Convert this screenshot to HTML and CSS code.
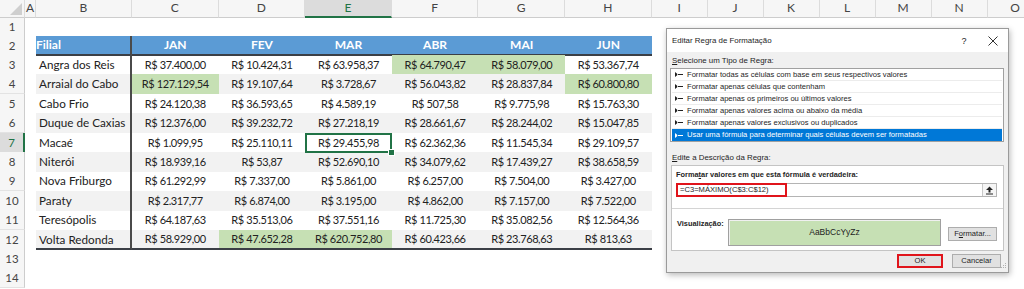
FILE: index.html
```html
<!DOCTYPE html>
<html lang="pt-BR">
<head>
<meta charset="utf-8">
<title>Editar Regra de Formatação</title>
<link rel="stylesheet" href="styles.css">
</head>
<body>
<div class="sheet">
  <div class="row colhdr">
    <div class="ch corner"><svg class="tri" width="12" height="12" viewBox="0 0 12 12"><polygon points="12,0 12,12 0,12" fill="#cfcfcf"/></svg></div>
    <div class="ch">A</div><div class="ch">B</div><div class="ch">C</div><div class="ch">D</div>
    <div class="ch sel">E</div><div class="ch">F</div><div class="ch">G</div><div class="ch">H</div>
    <div class="ch">I</div><div class="ch">J</div><div class="ch">K</div><div class="ch">L</div>
    <div class="ch">M</div><div class="ch">N</div><div class="ch">O</div>
  </div>
  <div class="row r1"><div class="rh">1</div></div>
  <div class="row r2">
    <div class="rh">2</div><div></div>
    <div class="th nm sep">Filial</div>
    <div class="th">JAN</div><div class="th">FEV</div><div class="th">MAR</div>
    <div class="th">ABR</div><div class="th">MAI</div><div class="th">JUN</div>
  </div>
  <div class="row">
    <div class="rh">3</div><div></div>
    <div class="td nm sep">Angra dos Reis</div>
    <div class="td">R$ 37.400,00</div><div class="td">R$ 10.424,31</div><div class="td">R$ 63.958,37</div>
    <div class="td hi">R$ 64.790,47</div><div class="td hi">R$ 58.079,00</div><div class="td">R$ 53.367,74</div>
  </div>
  <div class="row alt">
    <div class="rh">4</div><div></div>
    <div class="td nm sep">Arraial do Cabo</div>
    <div class="td hi">R$ 127.129,54</div><div class="td">R$ 19.107,64</div><div class="td">R$ 3.728,67</div>
    <div class="td">R$ 56.043,82</div><div class="td">R$ 28.837,84</div><div class="td hi">R$ 60.800,80</div>
  </div>
  <div class="row">
    <div class="rh">5</div><div></div>
    <div class="td nm sep">Cabo Frio</div>
    <div class="td">R$ 24.120,38</div><div class="td">R$ 36.593,65</div><div class="td">R$ 4.589,19</div>
    <div class="td">R$ 507,58</div><div class="td">R$ 9.775,98</div><div class="td">R$ 15.763,30</div>
  </div>
  <div class="row alt">
    <div class="rh">6</div><div></div>
    <div class="td nm sep">Duque de Caxias</div>
    <div class="td">R$ 12.376,00</div><div class="td">R$ 39.232,72</div><div class="td">R$ 27.218,19</div>
    <div class="td">R$ 28.661,67</div><div class="td">R$ 28.244,02</div><div class="td">R$ 15.047,85</div>
  </div>
  <div class="row">
    <div class="rh rsel">7</div><div></div>
    <div class="td nm sep">Macaé</div>
    <div class="td">R$ 1.099,95</div><div class="td">R$ 25.110,11</div><div class="td active">R$ 29.455,98</div>
    <div class="td">R$ 62.362,36</div><div class="td">R$ 11.545,34</div><div class="td">R$ 29.109,57</div>
  </div>
  <div class="row alt">
    <div class="rh">8</div><div></div>
    <div class="td nm sep">Niterói</div>
    <div class="td">R$ 18.939,16</div><div class="td">R$ 53,87</div><div class="td">R$ 52.690,10</div>
    <div class="td">R$ 34.079,62</div><div class="td">R$ 17.439,27</div><div class="td">R$ 38.658,59</div>
  </div>
  <div class="row">
    <div class="rh">9</div><div></div>
    <div class="td nm sep">Nova Friburgo</div>
    <div class="td">R$ 61.292,99</div><div class="td">R$ 7.337,00</div><div class="td">R$ 5.861,00</div>
    <div class="td">R$ 6.257,00</div><div class="td">R$ 7.504,00</div><div class="td">R$ 3.427,00</div>
  </div>
  <div class="row alt">
    <div class="rh">10</div><div></div>
    <div class="td nm sep">Paraty</div>
    <div class="td">R$ 2.317,77</div><div class="td">R$ 6.874,00</div><div class="td">R$ 3.195,00</div>
    <div class="td">R$ 4.862,00</div><div class="td">R$ 7.157,00</div><div class="td">R$ 7.522,00</div>
  </div>
  <div class="row">
    <div class="rh">11</div><div></div>
    <div class="td nm sep">Teresópolis</div>
    <div class="td">R$ 64.187,63</div><div class="td">R$ 35.513,06</div><div class="td">R$ 37.551,16</div>
    <div class="td">R$ 11.725,30</div><div class="td">R$ 35.082,56</div><div class="td">R$ 12.564,36</div>
  </div>
  <div class="row alt last">
    <div class="rh">12</div><div></div>
    <div class="td nm sep">Volta Redonda</div>
    <div class="td">R$ 58.929,00</div><div class="td hi">R$ 47.652,28</div><div class="td hi">R$ 620.752,80</div>
    <div class="td">R$ 60.423,66</div><div class="td">R$ 23.768,63</div><div class="td">R$ 813,63</div>
  </div>
  <div class="row"><div class="rh">13</div></div>
  <div class="row"><div class="rh">14</div></div>
</div>

<div class="dlg">
  <div class="titlebar">
    <span class="ttl">Editar Regra de Formatação</span>
    <span class="q">?</span>
    <span class="x"><svg width="10" height="10" viewBox="0 0 10 10"><path d="M0.5 0.5 L9.5 9.5 M9.5 0.5 L0.5 9.5" stroke="#333" stroke-width="1" fill="none"/></svg></span>
  </div>
  <div class="dbody">
    <div class="lbl"><u>S</u>elecione um Tipo de Regra:</div>
    <div class="list">
      <div class="item"><svg class="ar" width="8" height="5" viewBox="0 0 8 5"><path d="M0 0 L0 5 L3 2.5 Z M2 2 H8 V3 H2 Z" fill="#222"/></svg>Formatar todas as células com base em seus respectivos valores</div>
      <div class="item"><svg class="ar" width="8" height="5" viewBox="0 0 8 5"><path d="M0 0 L0 5 L3 2.5 Z M2 2 H8 V3 H2 Z" fill="#222"/></svg>Formatar apenas células que contenham</div>
      <div class="item"><svg class="ar" width="8" height="5" viewBox="0 0 8 5"><path d="M0 0 L0 5 L3 2.5 Z M2 2 H8 V3 H2 Z" fill="#222"/></svg>Formatar apenas os primeiros ou últimos valores</div>
      <div class="item"><svg class="ar" width="8" height="5" viewBox="0 0 8 5"><path d="M0 0 L0 5 L3 2.5 Z M2 2 H8 V3 H2 Z" fill="#222"/></svg>Formatar apenas valores acima ou abaixo da média</div>
      <div class="item"><svg class="ar" width="8" height="5" viewBox="0 0 8 5"><path d="M0 0 L0 5 L3 2.5 Z M2 2 H8 V3 H2 Z" fill="#222"/></svg>Formatar apenas valores exclusivos ou duplicados</div>
      <div class="item on"><svg class="ar" width="8" height="5" viewBox="0 0 8 5"><path d="M0 0 L0 5 L3 2.5 Z M2 2 H8 V3 H2 Z" fill="#fff"/></svg>Usar uma fórmula para determinar quais células devem ser formatadas</div>
    </div>
    <div class="lbl lbl2"><u>E</u>dite a Descrição da Regra:</div>
    <div class="group">
      <div class="gtop">
        <div class="blbl">Forma<u>t</u>ar valores em que esta fórmula é verdadeira:</div>
        <div class="input">
          <span class="formula">=C3=MÁXIMO(C$3:C$12)</span>
          <span class="ibtn"><svg width="9" height="9" viewBox="0 0 9 9"><path d="M4.5 0.5 L8 4 H5.5 V6.5 H3.5 V4 H1 Z" fill="#222"/><rect x="1" y="7.5" width="7" height="1" fill="#222"/></svg></span>
        </div>
      </div>
      <div class="gbot">
        <div class="blbl vis">Visualização:</div>
        <div class="preview">AaBbCcYyZz</div>
        <div class="btn fmt">F<u>o</u>rmatar...</div>
      </div>
    </div>
    <div class="actions">
      <div class="btn ok">OK</div>
      <div class="btn cancel">Cancelar</div>
    </div>
  </div>
  <svg class="grip" width="8" height="8" viewBox="0 0 8 8"><g fill="#b0b0b0"><rect x="6" y="0" width="1" height="1"/><rect x="4" y="2" width="1" height="1"/><rect x="6" y="2" width="1" height="1"/><rect x="2" y="4" width="1" height="1"/><rect x="4" y="4" width="1" height="1"/><rect x="6" y="4" width="1" height="1"/></g></svg>
</div>
</body>
</html>
```
FILE: styles.css
```css
* { box-sizing: border-box; }
html, body { margin: 0; padding: 0; }
body {
  width: 1024px;
  height: 289px;
  overflow: hidden;
  position: relative;
  background: #fff;
  font-family: Lato, "Liberation Sans", sans-serif;
  color: #222;
}

.sheet { display: flex; flex-direction: column; }

.row {
  display: grid;
  grid-template-columns: 25px 11px 96px repeat(6, 86.6px) repeat(7, 56px);
  height: 19.4px;
  font-size: 12px;
  line-height: 19px;
  white-space: nowrap;
}
.colhdr { height: 17px; }
.r1 { height: 19px; }
.r2 { height: 19px; }

.ch {
  background: #f6f6f6;
  border-right: 1px solid #dcdcdc;
  border-bottom: 1px solid #cdcdcd;
  color: #444;
  text-align: center;
  line-height: 16px;
  font-size: 12px;
}
.ch.sel {
  background: #dcdcdc;
  border-bottom: 2px solid #217346;
  color: #217346;
}
.corner { position: relative; }
.corner .tri { position: absolute; right: 2px; bottom: 2px; }

.rh {
  background: #f6f6f6;
  border-right: 1px solid #cdcdcd;
  border-bottom: 1px solid #e3e3e3;
  color: #444;
  text-align: center;
  font-size: 11.5px;
}
.rh.rsel {
  background: #dcdcdc;
  border-right: 2px solid #217346;
  color: #217346;
}

.th {
  background: #5b9bd5;
  color: #fff;
  font-weight: bold;
  text-align: center;
  border-bottom: 2px solid #3b3f46;
  line-height: 17px;
  font-size: 12px;
}
.th.nm { text-align: left; }

.td {
  text-align: center;
  color: #222;
  font-size: 11px;
  letter-spacing: -0.4px;
}
.td.nm {
  padding-left: 3px;
  text-align: left;
  font-size: 11.7px;
  letter-spacing: 0;
}
.sep { border-right: 2px solid #4a4a4a; }
.alt .td { background: #f2f2f2; }
.td.hi, .alt .td.hi { background: #c6e0b4; }
.last .td { border-bottom: 2px solid #3b3f46; line-height: 18px; }

.td.active {
  position: relative;
  box-shadow: inset 0 0 0 2px #217346;
}
.td.active::after {
  content: "";
  position: absolute;
  right: -3px;
  bottom: -3px;
  width: 5px;
  height: 5px;
  background: #217346;
  border: 1px solid #fff;
}

/* ---------- dialog ---------- */
.dlg {
  position: absolute;
  left: 666px;
  top: 28px;
  width: 343px;
  height: 245px;
  background: #f0f0f0;
  border: 1px solid #9a9a9a;
  box-shadow: 1px 2px 6px rgba(0, 0, 0, 0.28);
  font-family: "Liberation Sans", Arial, sans-serif;
  font-size: 7.6px;
  color: #1e1e1e;
  white-space: nowrap;
}
.titlebar {
  height: 23px;
  background: #fff;
  display: flex;
  align-items: center;
  padding-left: 5px;
  font-size: 7.9px;
}
.ttl { flex: 1; }
.q { width: 12px; text-align: center; margin-right: 8px; font-size: 9px; }
.x { width: 30px; display: flex; justify-content: center; }

.dbody { padding: 3px 4px 0 3px; }
.lbl { height: 12px; line-height: 12px; padding-left: 2px; font-size: 7.9px; }
.lbl2 { margin-top: 10px; }
.list {
  margin-top: 1px;
  background: #fff;
  border: 1px solid #a0a0a0;
  padding: 0 1px;
}
.item {
  height: 12px;
  line-height: 12px;
  border-bottom: 1px solid #ececec;
  display: flex;
  align-items: center;
  padding-left: 3px;
  font-size: 7.6px;
}
.item:last-child { border-bottom: none; }
.item .ar { margin-right: 4px; flex: none; }
.item.on { background: #0078d7; color: #fff; }

.group {
  margin-top: 1px;
  margin-left: 1px;
  background: #fff;
  border: 1px solid #c4c4c4;
  height: 86px;
  display: flex;
  flex-direction: column;
}
.gtop {
  padding: 3px 6px 0 4px;
  height: 43px;
  border-bottom: 1px solid #d4d4d4;
}
.blbl { font-weight: bold; height: 12px; line-height: 12px; font-size: 7.4px; }
.input {
  margin-top: 2px;
  height: 14px;
  border: 1px solid #b4b4b4;
  display: flex;
  align-items: stretch;
  background: #fff;
}
.formula {
  width: 111px;
  margin: -1px 0 -1px -1px;
  border: 2px solid #e0141b;
  padding-left: 2px;
  line-height: 10px;
  font-size: 7.6px;
}
.ibtn {
  margin-left: auto;
  width: 14px;
  border-left: 1px solid #c8c8c8;
  background: #f5f5f5;
  display: flex;
  align-items: center;
  justify-content: center;
}

.gbot {
  display: flex;
  align-items: flex-start;
  padding: 10px 6px 0 5px;
}
.vis { margin-top: -1px; width: 51px; }
.preview {
  width: 213px;
  height: 27px;
  background: #c6e0b4;
  border: 1px solid #a0a0a0;
  box-shadow: inset 1px 1px 0 #f0f0f0;
  text-align: center;
  line-height: 25px;
  font-size: 8.5px;
}
.btn {
  height: 14px;
  border: 1px solid #adadad;
  background: #e1e1e1;
  text-align: center;
  line-height: 12px;
  font-size: 7.6px;
}
.fmt { width: 49px; margin-left: auto; margin-top: 8px; }

.actions {
  display: flex;
  justify-content: flex-end;
  gap: 9px;
  margin-top: 3px;
  padding-right: 3px;
}
.ok { width: 46px; border: 2px solid #e0141b; line-height: 10px; }
.cancel { width: 49px; }

.grip { position: absolute; right: 1px; bottom: 1px; }
```
